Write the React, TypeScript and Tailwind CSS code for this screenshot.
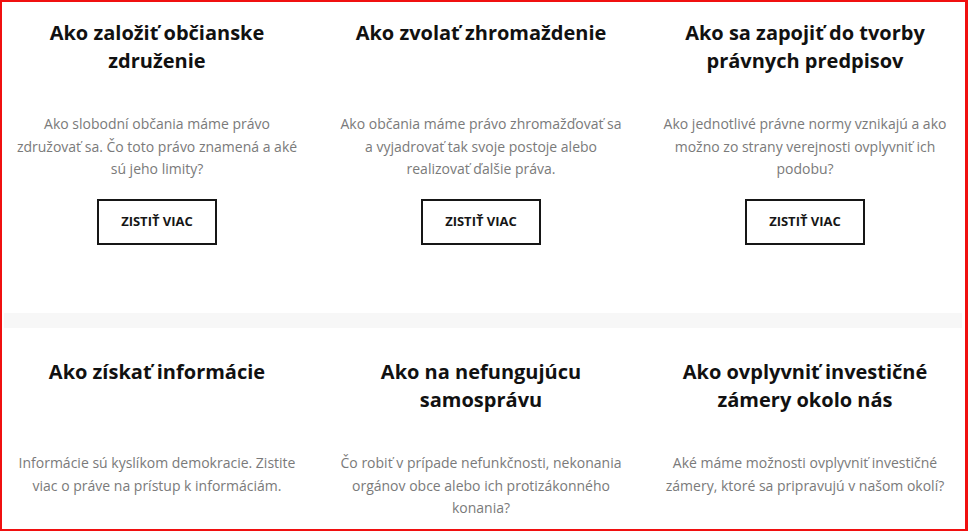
const rows = [
  [
    {
      title: 'Ako založiť občianske združenie',
      text: 'Ako slobodní občania máme právo združovať sa. Čo toto právo znamená a aké sú jeho limity?',
    },
    {
      title: 'Ako zvolať zhromaždenie',
      text: 'Ako občania máme právo zhromažďovať sa a vyjadrovať tak svoje postoje alebo realizovať ďalšie práva.',
    },
    {
      title: 'Ako sa zapojiť do tvorby právnych predpisov',
      text: 'Ako jednotlivé právne normy vznikajú a ako možno zo strany verejnosti ovplyvniť ich podobu?',
    },
  ],
  [
    {
      title: 'Ako získať informácie',
      text: 'Informácie sú kyslíkom demokracie. Zistite viac o práve na prístup k informáciám.',
    },
    {
      title: 'Ako na nefungujúcu samosprávu',
      text: 'Čo robiť v prípade nefunkčnosti, nekonania orgánov obce alebo ich protizákonného konania?',
    },
    {
      title: 'Ako ovplyvniť investičné zámery okolo nás',
      text: 'Aké máme možnosti ovplyvniť investičné zámery, ktoré sa pripravujú v našom okolí?',
    },
  ],
];

type Item = { title: string; text: string };

const Card = ({ item, button }: { item: Item; button?: boolean }) => (
  <div className="flex flex-col items-center pl-[10px] pr-[14px] text-center">
    <h3 className="min-h-[56px] text-[20px] font-bold leading-[28px] text-[#111]">{item.title}</h3>
    <p className="mt-[38px] text-[14px] leading-[22.5px] text-[#7a7a7a]">{item.text}</p>
    {button && (
      <a
        href="#"
        className="mt-[18px] flex h-[46px] w-[120px] items-center justify-center border-2 border-[#161616] text-[13px] font-bold uppercase text-[#161616]"
      >
        Zistiť viac
      </a>
    )}
  </div>
);

export default function App() {
  return (
    <div
      className="h-[531px] w-[968px] overflow-hidden border-t-2 border-l-2 border-r-[3px] border-b-2 border-[#f01010] bg-white"
      style={{ fontFamily: '"Open Sans", "Noto Sans", sans-serif' }}
    >
      <div className="grid h-[311px] grid-cols-[repeat(3,314px)] gap-x-[10px] pt-[17px]">
        {rows[0].map((item) => (
          <Card key={item.title} item={item} button />
        ))}
      </div>
      <div className="ml-[2px] mr-[3px] h-[15px] bg-[#f7f7f7]" />
      <div className="grid grid-cols-[repeat(3,314px)] gap-x-[10px] pt-[30px]">
        {rows[1].map((item) => (
          <Card key={item.title} item={item} />
        ))}
      </div>
    </div>
  );
}
